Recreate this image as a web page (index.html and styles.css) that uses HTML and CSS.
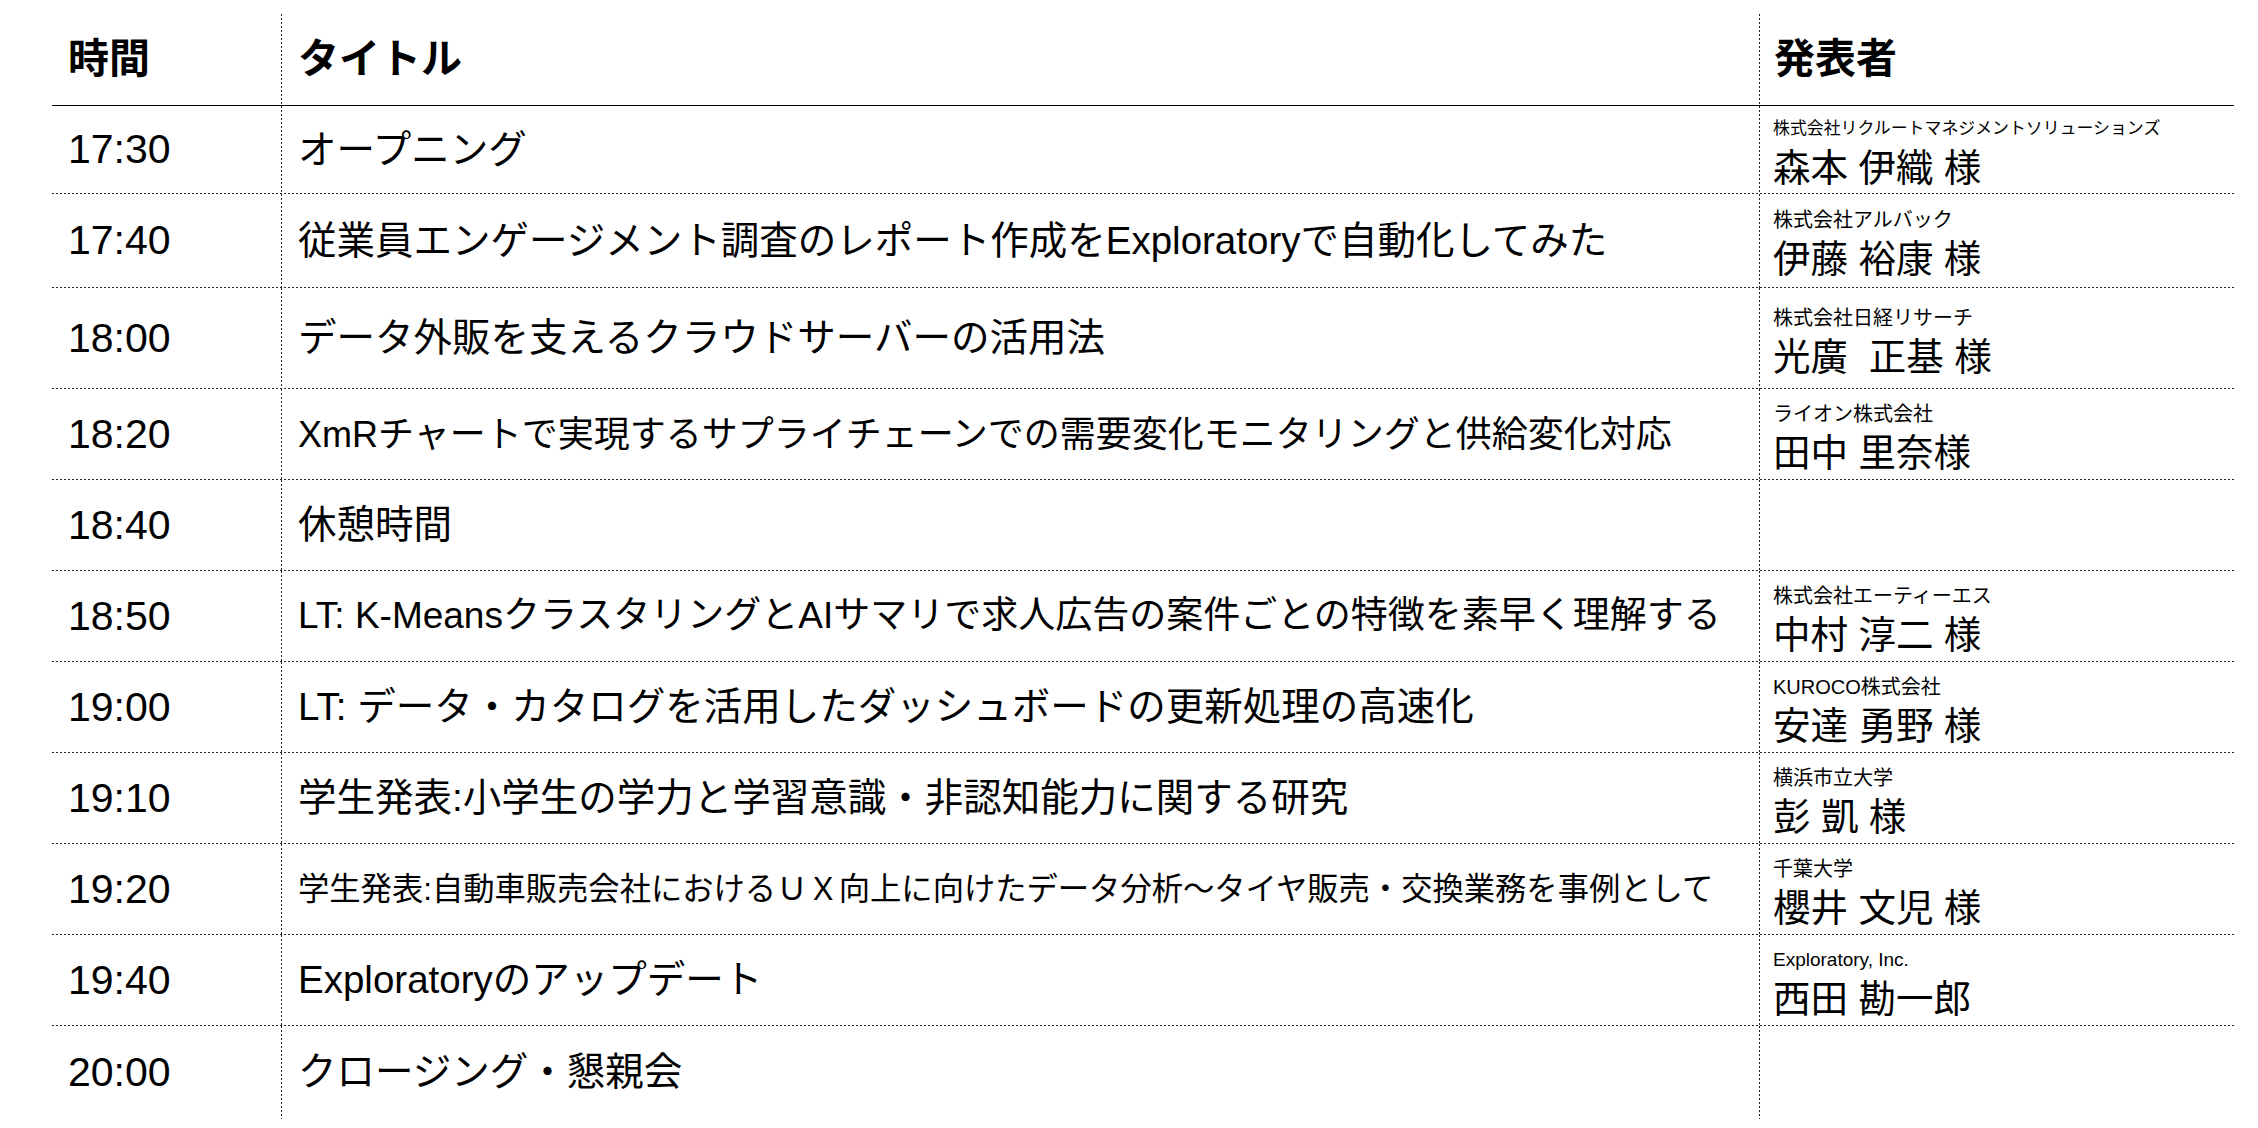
FILE: index.html
```html
<!DOCTYPE html>
<html lang="ja">
<head>
  <meta charset="UTF-8">
  <meta name="viewport" content="width=device-width, initial-scale=1.0">
  <title>タイムテーブル</title>
  <link rel="stylesheet" href="styles.css">
</head>
<body>
  <div class="timetable">
    <div class="row header">
      <div class="cell time">時間</div>
      <div class="cell title">タイトル</div>
      <div class="cell speaker">発表者</div>
    </div>

    <div class="row tight">
      <div class="cell time">17:30</div>
      <div class="cell title">オープニング</div>
      <div class="cell speaker">
        <div class="company long">株式会社リクルートマネジメントソリューションズ</div>
        <div class="name">森本 伊織 様</div>
      </div>
    </div>

    <div class="row loose">
      <div class="cell time">17:40</div>
      <div class="cell title">従業員エンゲージメント調査のレポート作成をExploratoryで自動化してみた</div>
      <div class="cell speaker">
        <div class="company">株式会社アルバック</div>
        <div class="name">伊藤 裕康 様</div>
      </div>
    </div>

    <div class="row tall">
      <div class="cell time">18:00</div>
      <div class="cell title">データ外販を支えるクラウドサーバーの活用法</div>
      <div class="cell speaker">
        <div class="company">株式会社日経リサーチ</div>
        <div class="name">光廣&nbsp;&nbsp;正基 様</div>
      </div>
    </div>

    <div class="row">
      <div class="cell time">18:20</div>
      <div class="cell title narrow">XmRチャートで実現するサプライチェーンでの需要変化モニタリングと供給変化対応</div>
      <div class="cell speaker">
        <div class="company">ライオン株式会社</div>
        <div class="name">田中 里奈様</div>
      </div>
    </div>

    <div class="row">
      <div class="cell time">18:40</div>
      <div class="cell title">休憩時間</div>
      <div class="cell speaker"></div>
    </div>

    <div class="row">
      <div class="cell time">18:50</div>
      <div class="cell title fit">LT: K-MeansクラスタリングとAIサマリで求人広告の案件ごとの特徴を素早く理解する</div>
      <div class="cell speaker">
        <div class="company">株式会社エーティーエス</div>
        <div class="name">中村 淳二 様</div>
      </div>
    </div>

    <div class="row">
      <div class="cell time">19:00</div>
      <div class="cell title">LT: データ・カタログを活用したダッシュボードの更新処理の高速化</div>
      <div class="cell speaker">
        <div class="company">KUROCO株式会社</div>
        <div class="name">安達 勇野 様</div>
      </div>
    </div>

    <div class="row">
      <div class="cell time">19:10</div>
      <div class="cell title">学生発表:小学生の学力と学習意識・非認知能力に関する研究</div>
      <div class="cell speaker">
        <div class="company">横浜市立大学</div>
        <div class="name">彭 凱 様</div>
      </div>
    </div>

    <div class="row">
      <div class="cell time">19:20</div>
      <div class="cell title small">学生発表:自動車販売会社におけるＵＸ向上に向けたデータ分析〜タイヤ販売・交換業務を事例として</div>
      <div class="cell speaker">
        <div class="company">千葉大学</div>
        <div class="name">櫻井 文児 様</div>
      </div>
    </div>

    <div class="row">
      <div class="cell time">19:40</div>
      <div class="cell title">Exploratoryのアップデート</div>
      <div class="cell speaker">
        <div class="company latin">Exploratory, Inc.</div>
        <div class="name">西田 勘一郎</div>
      </div>
    </div>

    <div class="row last">
      <div class="cell time">20:00</div>
      <div class="cell title">クロージング・懇親会</div>
      <div class="cell speaker"></div>
    </div>
  </div>
</body>
</html>
```

FILE: styles.css
```css
* {
  box-sizing: border-box;
}

body {
  margin: 0;
  padding: 14px 0 0 52px;
  background: #fff;
  color: #000;
  font-family: "Liberation Sans", "Noto Sans CJK JP", sans-serif;
}

.timetable {
  width: 2182px;
}

/* dotted rules are drawn as 2px dashes so they look like the printed sheet */
.row {
  display: grid;
  grid-template-columns: 230px 1478px 474px;
  height: 91px;
  background: repeating-linear-gradient(to right, #222 0 2px, transparent 2px 4px) left bottom / 100% 1px no-repeat;
}

.row.header {
  height: 92px;
  border-bottom: 1px solid #000;
  background: none;
}

/* row heights follow the original sheet */
.row.tight {
  height: 88px;
}

.row.loose {
  height: 94px;
}

.row.tall {
  height: 101px;
}

.row.last {
  height: 93px;
  background: none;
}

.cell {
  display: flex;
  align-items: center;
  padding-left: 16px;
  line-height: 1.2;
  white-space: nowrap;
}

.cell.time,
.cell.title {
  background: repeating-linear-gradient(to bottom, #222 0 2px, transparent 2px 4px) right top / 1px 100% no-repeat;
}

.time {
  font-size: 41px;
}

.title {
  font-size: 38.5px;
}

.title.fit {
  font-size: 37px;
}

.title.narrow {
  font-size: 36px;
}

.title.small {
  font-size: 31.3px;
}

.speaker {
  flex-direction: column;
  align-items: flex-start;
  justify-content: center;
  padding-left: 13px;
  padding-top: 6px;
}

.header .cell {
  font-size: 41px;
  font-weight: bold;
  padding-top: 0;
}

.header .speaker {
  padding-left: 14px;
}

.company {
  font-size: 20px;
  line-height: 30px;
}

.company.long {
  font-size: 16.9px;
}

.company.latin {
  font-size: 19px;
}

.name {
  font-size: 37.5px;
  line-height: 48px;
}
```
